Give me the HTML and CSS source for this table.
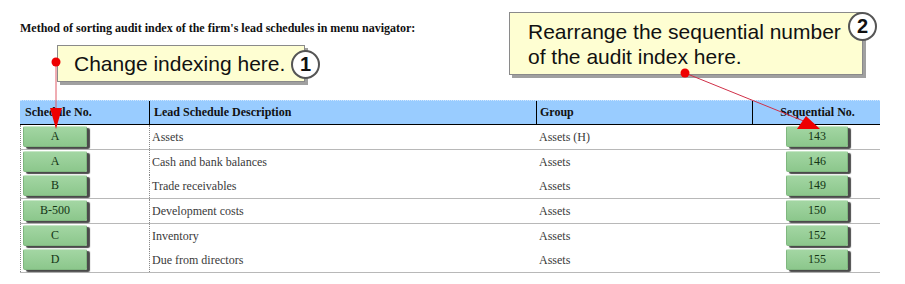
FILE: index.html
```html
<!DOCTYPE html>
<html>
<head>
<meta charset="utf-8">
<link rel="stylesheet" href="styles.css">
</head>
<body>
<div class="page">
  <div class="title">Method of sorting audit index of the firm's lead schedules in menu navigator:</div>

  <div class="table">
    <div class="row head">
      <div class="cell c1">Schedule No.</div>
      <div class="cell c2">Lead Schedule Description</div>
      <div class="cell c3">Group</div>
      <div class="cell c4">Sequential No.</div>
    </div>
    <div class="row tall line">
      <div class="cell c1"><span class="btn">A</span></div>
      <div class="cell c2">Assets</div>
      <div class="cell c3">Assets (H)</div>
      <div class="cell c4"><span class="btn seq">143</span></div>
    </div>
    <div class="row tall">
      <div class="cell c1"><span class="btn">A</span></div>
      <div class="cell c2">Cash and bank balances</div>
      <div class="cell c3">Assets</div>
      <div class="cell c4"><span class="btn seq">146</span></div>
    </div>
    <div class="row short line">
      <div class="cell c1"><span class="btn">B</span></div>
      <div class="cell c2">Trade receivables</div>
      <div class="cell c3">Assets</div>
      <div class="cell c4"><span class="btn seq">149</span></div>
    </div>
    <div class="row tall line">
      <div class="cell c1"><span class="btn">B-500</span></div>
      <div class="cell c2">Development costs</div>
      <div class="cell c3">Assets</div>
      <div class="cell c4"><span class="btn seq">150</span></div>
    </div>
    <div class="row tall">
      <div class="cell c1"><span class="btn">C</span></div>
      <div class="cell c2">Inventory</div>
      <div class="cell c3">Assets</div>
      <div class="cell c4"><span class="btn seq">152</span></div>
    </div>
    <div class="row short line">
      <div class="cell c1"><span class="btn">D</span></div>
      <div class="cell c2">Due from directors</div>
      <div class="cell c3">Assets</div>
      <div class="cell c4"><span class="btn seq">155</span></div>
    </div>
  </div>

  <div class="callout callout-1">Change indexing here.</div>
  <div class="badge badge-1">1</div>

  <div class="callout callout-2">Rearrange the sequential number<br>of the audit index here.</div>
  <div class="badge badge-2">2</div>

  <svg class="arrows" width="905" height="284" viewBox="0 0 905 284">
    <line x1="56" y1="62" x2="56" y2="110" stroke="#e05a66" stroke-width="1"/>
    <polygon points="50,108 62,108 56,129" fill="#ee0000"/>
    <circle cx="56" cy="62" r="4.5" fill="#ee0000"/>
    <line x1="685" y1="73" x2="806" y2="122" stroke="#d03048" stroke-width="1"/>
    <polygon points="806,116 797,129 820,129" fill="#ee0000"/>
    <circle cx="685" cy="73" r="4.5" fill="#ee0000"/>
  </svg>
</div>
</body>
</html>
```

FILE: styles.css
```css
* { box-sizing: border-box; }

html, body {
  margin: 0;
  padding: 0;
  background: #ffffff;
}

.page {
  position: relative;
  width: 905px;
  height: 284px;
  padding: 21px 0 0 20px;
  font-family: "Liberation Serif", "Times New Roman", serif;
  overflow: hidden;
}

.title {
  font-weight: bold;
  font-size: 12px;
  line-height: 14px;
  color: #111;
}

.table {
  margin-top: 65px;
  width: 860px;
  display: flex;
  flex-direction: column;
}

.row {
  display: grid;
  grid-template-columns: 129px 387px 216px 128px;
  font-size: 12px;
  color: #3a3a3a;
}

.row.tall { height: 25px; }
.row.short { height: 24px; }
.row.line { border-bottom: 1px solid #b8b8b8; }

.cell {
  display: flex;
  align-items: center;
  white-space: nowrap;
}

.head {
  height: 25px;
  background: #99ccff;
  border-top: 1px dotted #cfe6ff;
  border-bottom: 1px solid #000;
  font-weight: bold;
  color: #111;
}

.head .c1 { padding-left: 5px; }
.head .c2 { border-left: 1px solid #000; padding-left: 4px; }
.head .c3 { border-left: 1px solid #000; padding-left: 3px; }
.head .c4 { border-left: 1px solid #000; justify-content: center; padding-left: 2px; }

.row:not(.head) .c1 {
  border-left: 1px dotted #888;
  padding-left: 2px;
}
.row:not(.head) .c2 {
  border-left: 1px dotted #888;
  padding-left: 2px;
}
.row:not(.head) .c3 { padding-left: 3px; }
.row:not(.head) .c4 { justify-content: center; padding-left: 2px; }

.btn {
  display: flex;
  align-items: center;
  justify-content: center;
  width: 64px;
  height: 21px;
  background: linear-gradient(#a3d6a3, #8cc78c);
  border: 1px solid #7fb77f;
  border-top-color: #c5e6c5;
  border-radius: 2px;
  box-shadow: 3px 2px 1px #4a4a4a;
  color: #143514;
  font-size: 12px;
  position: relative;
  top: -1px;
}

.btn.seq { width: 62px; }

.callout {
  position: absolute;
  background: #fefed2;
  border: 1px solid #8a8a8a;
  box-shadow: 3px 3px 0 #a0a0a0;
  font-family: "Liberation Sans", Arial, sans-serif;
  font-size: 21px;
  color: #111;
}

.callout-1 {
  left: 57px;
  top: 45px;
  width: 248px;
  height: 37px;
  line-height: 35px;
  padding-left: 16px;
}

.callout-2 {
  left: 509px;
  top: 12px;
  width: 354px;
  height: 63px;
  line-height: 25px;
  padding: 6px 0 0 18px;
}

.badge {
  position: absolute;
  width: 29px;
  height: 29px;
  border-radius: 50%;
  background: #ffffff;
  border: 2px solid #555;
  display: flex;
  align-items: center;
  justify-content: center;
  font-family: "Liberation Sans", Arial, sans-serif;
  font-weight: bold;
  font-size: 20px;
  color: #111;
}

.badge-1 { left: 291px; top: 50px; }
.badge-2 { left: 848px; top: 12px; }

.arrows {
  position: absolute;
  left: 0;
  top: 0;
  pointer-events: none;
}
```
